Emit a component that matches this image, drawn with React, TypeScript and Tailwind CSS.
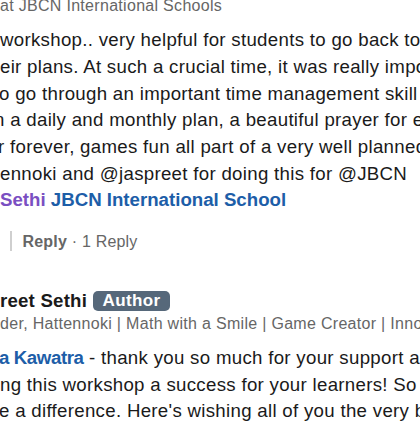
import React from 'react';

const bodyLines: [string, string][] = [
  ['workshop.. very helpful for students to go back to', 'ml-0'],
  ['eir plans. At such a crucial time, it was really important', 'ml-0'],
  ['o go through an important time management skill', '-ml-[1px]'],
  ['n a daily and monthly plan, a beautiful prayer for every', '-ml-[6px]'],
  ['r forever, games fun all part of a very well planned', '-ml-[2px]'],
  ['ennoki and @jaspreet for doing this for @JBCN', 'ml-0'],
];

const Line = ({ children, className = '' }: { children: React.ReactNode; className?: string }) => (
  <div className={`whitespace-nowrap text-[18.67px] leading-[26.67px] tracking-[0.3px] text-[#1a1a1a] ${className}`}>
    {children}
  </div>
);

const App = () => {
  return (
    <div className="w-[420px] h-[431px] overflow-hidden bg-white font-['Liberation_Sans',Arial,sans-serif]">
      {/* Commenter headline (cut at top) */}
      <div className="-mt-[5px] whitespace-nowrap text-[16px] leading-[21.33px] tracking-[0.3px] text-[#666666]">
        at JBCN International Schools
      </div>

      {/* Comment body */}
      <div className="mt-[11px]">
        {bodyLines.map(([text, cls], i) => (
          <Line key={i} className={cls}>
            {text}
          </Line>
        ))}
        <Line className="font-bold tracking-[0px]">
          <span className="text-[#7a4fc2]">Sethi</span>{' '}
          <span className="text-[#1d5ea8]">JBCN International School</span>
        </Line>
      </div>

      {/* Actions */}
      <div className="mt-[17px] flex h-[20px] items-center">
        <div className="ml-[10px] h-[20px] w-[1.5px] bg-[#cfcfcf]" />
        <div className="ml-[11px] whitespace-nowrap text-[16px] leading-[21px] tracking-[0.2px] text-[#666666]">
          <span className="font-bold">Reply</span>
          <span> · 1 Reply</span>
        </div>
      </div>

      {/* Reply from author */}
      <div className="mt-[37px]">
        <div className="flex h-[26px] items-center">
          <span className="whitespace-nowrap text-[18.67px] font-bold tracking-[0.2px] text-[#1a1a1a]">reet Sethi</span>
          <span className="ml-[6px] flex h-[20px] w-[77px] items-center justify-center rounded-[5px] bg-[#56687a] text-[17px] font-bold tracking-[0.4px] text-white">
            Author
          </span>
        </div>
        <div className="whitespace-nowrap text-[16px] leading-[20px] tracking-[0.3px] text-[#666666]">
          der, Hattennoki | Math with a Smile | Game Creator | Innovator
        </div>
        <div className="mt-[11px]">
          <Line className="-ml-[1px]">
            <span className="font-bold tracking-[-0.4px] text-[#1d5ea8]">a Kawatra</span> - thank you so much for your
            support and
          </Line>
          <Line>ng this workshop a success for your learners! So</Line>
          <Line className="-ml-[1px]">e a difference. Here's wishing all of you the very best</Line>
        </div>
      </div>
    </div>
  );
};

export default App;
